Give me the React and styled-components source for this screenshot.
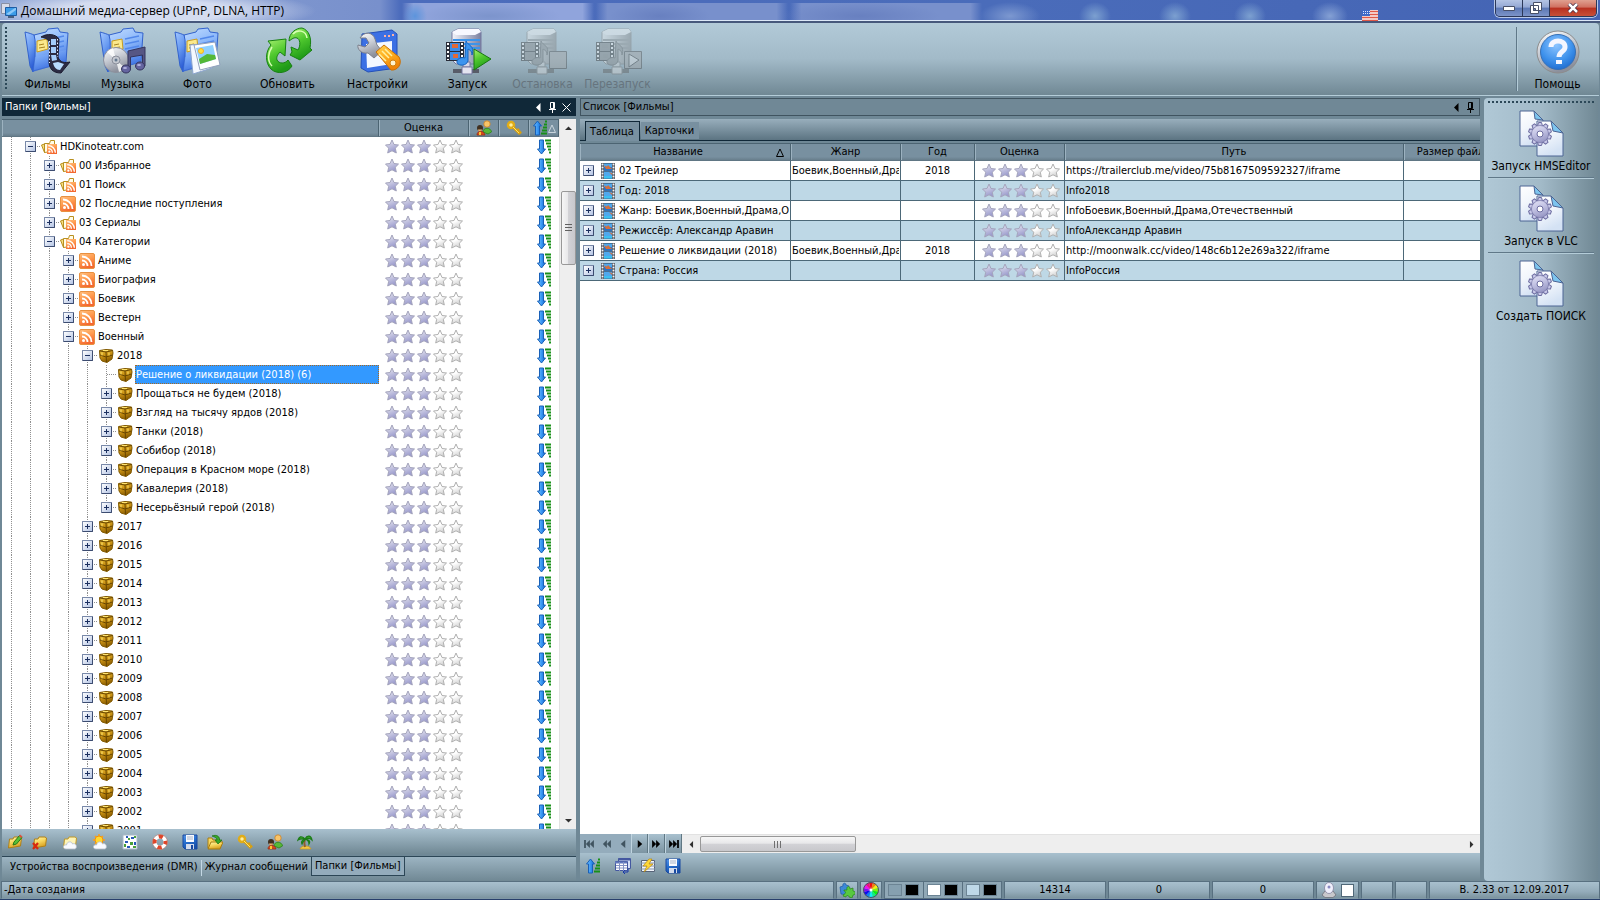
import React, { useState } from 'react';
import styled, { createGlobalStyle, css } from 'styled-components';

const GlobalStyle = createGlobalStyle`
    * { box-sizing: border-box; }
    body {
        margin: 0;
        overflow: hidden;
        background: #6f8896;
        color: #000;
        font-family: "DejaVu Sans Condensed", "Noto Sans", sans-serif;
        font-size: 11px;
        line-height: 14px;
    }
    button {
        margin: 0;
        padding: 0;
        border: 0;
        background: none;
        color: inherit;
        font: inherit;
    }
    svg { display: block; flex: none; }
`

/* ---------- data ---------- */

const treeRows = [
    { text: 'HDKinoteatr.com', level: 1, icon: 'folder', open: true },
    { text: '00 Избранное', level: 2, icon: 'folder' },
    { text: '01 Поиск', level: 2, icon: 'folder' },
    { text: '02 Последние поступления', level: 2, icon: 'rss' },
    { text: '03 Сериалы', level: 2, icon: 'folder' },
    { text: '04 Категории', level: 2, icon: 'folder', open: true },
    { text: 'Аниме', level: 3, icon: 'rss' },
    { text: 'Биография', level: 3, icon: 'rss' },
    { text: 'Боевик', level: 3, icon: 'rss' },
    { text: 'Вестерн', level: 3, icon: 'rss' },
    { text: 'Военный', level: 3, icon: 'rss', open: true },
    { text: '2018', level: 4, icon: 'box', open: true },
    { text: 'Решение о ликвидации (2018) (6)', level: 5, icon: 'box', leaf: true },
    { text: 'Прощаться не будем (2018)', level: 5, icon: 'box' },
    { text: 'Взгляд на тысячу ярдов (2018)', level: 5, icon: 'box' },
    { text: 'Танки (2018)', level: 5, icon: 'box' },
    { text: 'Собибор (2018)', level: 5, icon: 'box' },
    { text: 'Операция в Красном море (2018)', level: 5, icon: 'box' },
    { text: 'Кавалерия (2018)', level: 5, icon: 'box' },
    { text: 'Несерьёзный герой (2018)', level: 5, icon: 'box', last: true },
]

for (let year = 2017; year >= 2001; year--) {
    treeRows.push({ text: String(year), level: 4, icon: 'box' })
}

const movies = [
    { name: '02 Трейлер', genre: 'Боевик,Военный,Драма', year: '2018', path: 'https://trailerclub.me/video/75b8167509592327/iframe' },
    { name: 'Год: 2018', path: 'Info2018' },
    { name: 'Жанр: Боевик,Военный,Драма,Отечественный', path: 'InfoБоевик,Военный,Драма,Отечественный' },
    { name: 'Режиссёр: Александр Аравин', path: 'InfoАлександр Аравин' },
    { name: 'Решение о ликвидации (2018)', genre: 'Боевик,Военный,Драма', year: '2018', path: 'http://moonwalk.cc/video/148c6b12e269a322/iframe' },
    { name: 'Страна: Россия', path: 'InfoРоссия' },
]

/* ---------- icons ---------- */

const Grad = ({ id, from, to, mid, flat }) => (
    <linearGradient id={id} x1="0" y1="0" x2={flat ? 1 : 0.4} y2={flat ? 0 : 1}>
        <stop offset="0" stopColor={from} />
        {mid && <stop offset="0.5" stopColor={mid} />}
        <stop offset="1" stopColor={to} />
    </linearGradient>
)

const IconDefs = () => (
    <svg width="0" height="0" aria-hidden="true">
        <defs>
            <Grad id="gFolder" from="#c4deff" mid="#8cb8fa" to="#3f74e4" />
            <Grad id="gFlap" from="#a4c8ff" mid="#6a9cf2" to="#2e5fd6" />
            <Grad id="gGreen" from="#a8f070" mid="#4fc82e" to="#1f9a18" />
            <Grad id="gStar" from="#f0f0f4" mid="#c4c4e0" to="#9898cc" />
            <Grad id="gStarOff" from="#ffffff" mid="#ffffff" to="#d4d4d4" />
            <Grad id="gRss" from="#ffc080" mid="#ff9c50" to="#f46830" />
            <Grad id="gBox" from="#f0c840" mid="#cc9414" to="#8a5c00" />
            <Grad id="gArrow" from="#7cc4ff" mid="#3a98f4" to="#1468d0" flat />
            <Grad id="gSilver" from="#ffffff" mid="#c8ccd4" to="#8c909c" />
            <Grad id="gServer" from="#f4f4fa" mid="#b8bcd0" to="#7c80a0" flat />
            <Grad id="gOrange" from="#ffd050" mid="#ffb020" to="#ee8408" />
            <Grad id="gGear" from="#e4e4f6" mid="#c4c4e4" to="#9c9cc8" />
            <Grad id="gPage" from="#ffffff" mid="#f2f6fc" to="#d4e2f4" />
            <Grad id="gYellow" from="#fff8b0" mid="#f8d860" to="#d8a020" />
            <Grad id="gFloppy" from="#5a98e8" mid="#2870d0" to="#1850a8" />
            <radialGradient id="gHelp" cx="0.45" cy="0.3" r="0.75">
                <stop offset="0" stopColor="#8cc4ff" />
                <stop offset="0.6" stopColor="#3f92ec" />
                <stop offset="1" stopColor="#1c68cc" />
            </radialGradient>
        </defs>
    </svg>
)

const BigSvg = ({ children }) => (
    <svg width="48" height="48" viewBox="0 0 48 48" aria-hidden="true">{children}</svg>
)

const SmallSvg = ({ children }) => (
    <svg width="16" height="16" viewBox="0 0 16 16" aria-hidden="true">{children}</svg>
)

const BlueFolder = () => (
    <g strokeLinejoin="round">
        <path d="M10 8 L22 5 L24 2 L34 1 L36 5 L44 6 L42 35 L9 44 Z" fill="url(#gFolder)" stroke="#3262cc" />
        <path d="M13 14 L23 12 L24 22 L13 25 Z" fill="#fbe98c" stroke="#c89c20" />
        <path d="M15 18l5-1M15 21l6-1" stroke="#a88420" />
        <path d="M26 12l14-3M26 17l14-3M26 22l14-3" stroke="#5288ea" strokeWidth="1.5" />
        <path d="M1 5 C5 6 8 7 10 8 C12 14 11 22 11 30 L9 45 L6 39 Z" fill="url(#gFlap)" stroke="#3262cc" />
        <path d="M11 30 L42 23 L42 35 L9 45 Z" fill="url(#gFlap)" opacity="0.45" />
    </g>
)

const FilmsIcon = () => (
    <BigSvg>
        <BlueFolder />
        <path d="M17 10 C23 6 32 7 35 12 L34 30 C36 36 41 36 46 35 L37 46 C29 46 25 42 25 34 L26 17 C25 12 21 11 17 10Z" fill="#2c2c44" stroke="#1c1c30" />
        <path d="M27 12h5v6h-5zM27 20h5v6h-5zM27 28h5l1 5-5 1z" fill="#a4ccfa" />
        <path d="M29 36l5-1 6 2-4 6c-4 0-6-3-7-7z" fill="#b8dcff" />
        <path d="M25.500 14v22M33.500 12v18" stroke="#e8ecff" strokeDasharray="1.5 2" />
    </BigSvg>
)

const MusicIcon = () => (
    <BigSvg>
        <BlueFolder />
        <circle cx="17" cy="33" r="12.5" fill="url(#gSilver)" stroke="#8c909c" />
        <path d="M17 33L8 25a12 12 0 0 1 6-4zM17 33l9 8a12 12 0 0 1-6 4z" fill="#fff" opacity="0.8" />
        <circle cx="17" cy="33" r="4" fill="#c4c8d0" stroke="#8a8e9a" />
        <circle cx="17" cy="33" r="1.5" fill="#677a90" />
        <path d="M29 24 L46 20 V39 H43.500 V28 L31.500 30 V42 H29Z" fill="#565684" stroke="#34345c" />
        <ellipse cx="27" cy="42" rx="4.500" ry="4" fill="#6464a0" stroke="#34345c" />
        <ellipse cx="41" cy="39" rx="4.500" ry="4" fill="#6464a0" stroke="#34345c" />
        <ellipse cx="26" cy="41" rx="2" ry="1" fill="#b4b4e0" />
        <ellipse cx="40" cy="38" rx="2" ry="1" fill="#b4b4e0" />
    </BigSvg>
)

const PhotoIcon = () => (
    <BigSvg>
        <BlueFolder />
        <path d="M16 18 L36 16 L38 41 L19 47 Z" fill="#f4f8ff" stroke="#8ca4cc" />
        <path d="M20 18 L41 15 L46 38 L26 43 Z" fill="#fff" stroke="#90a0bc" />
        <path d="M22 21 L39 18 L42 32 L26 37 Z" fill="#90d0ff" />
        <path d="M25 32 L33 27 L41 28 L42 32 L26 37 Z" fill="#54b838" />
        <circle cx="27" cy="24" r="2.500" fill="#ffe040" stroke="#f8b020" />
    </BigSvg>
)

const RefreshIcon = () => (
    <BigSvg>
        <g fill="url(#gGreen)" stroke="#188012" strokeLinejoin="round">
            <path d="M25 14 C25 6 32 1 38 1 C45 3 48 11 46 21 L48 23 L36 33 L26 28 L28 25 L27 20 L34 23 C37 18 36 12 33 11 C30 10 28 12 25 14Z" />
            <path d="M22 12 L4 14 L7 18 C1 25 1 36 7 42 C13 48 24 46 28 39 L24 33 C21 37 15 37 13 33 C12 30 14 27 16 25 L21 29 Z" />
        </g>
        <path d="M29 7c4-5 13-4 14 4M8 20c-4 6-5 14 0 19" fill="none" stroke="#d8ffb4" strokeWidth="1.5" />
    </BigSvg>
)

const SettingsIcon = () => (
    <BigSvg>
        <path d="M8 7 L38 3 L43 7 V41 L14 45 L7 41 Z" fill="#3c70e4" stroke="#2450b8" strokeLinejoin="round" />
        <path d="M12 17 L38 14 V37 L13 41 Z" fill="#f4f8ff" />
        <path d="M30 9h2M34 9h2M38 8h2" stroke="#ffb0a0" strokeWidth="2" />
        <path d="M6 11 C10 4 19 5 21 12 L23 18 L28 24 L20 31 L14 26 C7 27 3 22 4 18 L11 20 L15 16 L12 11 Z" fill="url(#gSilver)" stroke="#7c808c" />
        <path d="M22 25 L30 18 L45 30 C49 37 43 44 37 43 Z" fill="url(#gOrange)" stroke="#c87008" strokeLinejoin="round" />
        <path d="M28 24l7 7M31 22l7 7M25 27l7 7" stroke="#fff0a0" strokeWidth="1.5" />
        <circle cx="39" cy="36" r="3" fill="#fff4d0" stroke="#d08010" />
    </BigSvg>
)

const ServerBody = () => (
    <g>
        <path d="M8 5 L14 2 H35 L37 5 V29 L32 37 H12 L8 33 Z" fill="url(#gServer)" stroke="#7478a0" />
        <path d="M8 5 L14 2 H35 L37 5 L31 8 H12 Z" fill="#f8f8ff" />
        <path d="M9 13h27M9 17h27M9 21h27" stroke="#3d94ea" strokeWidth="2" />
        <path d="M19 35h7v5h-7z" fill="#d8d8e8" stroke="#7478a0" />
        <path d="M9 42h26v4h-26z" fill="#585c68" />
        <path d="M18 40h10v7h-10z" fill="#e4e4f0" stroke="#7478a0" />
        <path d="M2 15h18v19H2z" fill="#282c38" />
        <path d="M6 16h10v8H6zM6 25h10v8H6z" fill="#3c8ce8" />
        <path d="M8 17h6v4H8zM9 27h5v4H9z" fill="#e06838" />
        <path d="M4 16v17M18 16v17" stroke="#fff" strokeWidth="2" strokeDasharray="2 2" />
        <path d="M22 14 C24 19 31 18 28 28 C28 23 25 23 24 22 V34 C22 40 12 39 13 34 C14 31 18 30 21 31Z" fill="#3c94ee" stroke="#1464c0" />
    </g>
)

const StartIcon = () => (
    <BigSvg>
        <ServerBody />
        <path d="M30 22 L47 32 L30 43 Z" fill="url(#gGreen)" stroke="#187810" strokeLinejoin="round" />
    </BigSvg>
)

const StopIcon = () => (
    <BigSvg>
        <ServerBody />
        <path d="M30.500 24.500h17v17h-17z" fill="#9ca4a8" stroke="#404448" />
    </BigSvg>
)

const RestartIcon = () => (
    <BigSvg>
        <ServerBody />
        <path d="M30.500 24.500h17v17h-17z" fill="#9ca4a8" stroke="#404448" />
        <path d="M35 27l10 6-10 7z" fill="#e0e4e6" stroke="#34383c" />
    </BigSvg>
)

const HelpIcon = () => (
    <BigSvg>
        <circle cx="24" cy="25" r="21" fill="url(#gSilver)" stroke="#8c8c8c" />
        <circle cx="24" cy="25" r="17.5" fill="url(#gHelp)" stroke="#3870b4" />
        <path d="M17 20 C17 12 31 12 31 20 C31 25 25 24 25 30" fill="none" stroke="#f4f6ff" strokeWidth="5" />
        <path d="M22 33h6v4h-6z" fill="#f4f6ff" />
    </BigSvg>
)

const teeth = Array.from({ length: 10 }, (_, i) => i * 36)

const Gear = ({ x, y }) => (
    <g transform={`translate(${x} ${y})`}>
        {teeth.map((a) => (
            <path key={a} d="M-2.5 -8 L-1.5 -11.5 H1.5 L2.5 -8Z" transform={`rotate(${a})`} fill="#c8c8e8" stroke="#6c6ca0" />
        ))}
        <circle r="8.5" fill="url(#gGear)" stroke="#7c7cac" strokeWidth="0.6" />
        <circle r="3" fill="#fff" stroke="#6c6ca0" />
    </g>
)

const ScriptIcon = () => (
    <BigSvg>
        <path d="M3 2 H17 L26 11 V37 H3 Z" fill="url(#gPage)" stroke="#4c6494" />
        <path d="M17 2 L18 10 L26 11 Z" fill="#7cc4ee" stroke="#4c6494" />
        <path d="M20 12 H34 L46 24 V47 H20 Z" fill="url(#gPage)" stroke="#4c6494" />
        <path d="M34 12 L36 22 L46 24 Z" fill="#7cc4ee" stroke="#4c6494" />
        <Gear x={23} y={25} />
    </BigSvg>
)

const RssWaves = ({ x = 0, y = 0, k = 1 }) => (
    <g transform={`translate(${x} ${y}) scale(${k})`}>
        <circle cx="4.5" cy="11.5" r="1.5" fill="#fff" />
        <path d="M3 7.5a5.5 5.5 0 0 1 5.5 5.5M3 3.5a9.5 9.5 0 0 1 9.5 9.5" fill="none" stroke="#fff" strokeWidth="1.8" />
    </g>
)

const RssIcon = () => (
    <SmallSvg>
        <rect x="0.5" y="0.5" width="15" height="15" rx="1.5" fill="url(#gRss)" stroke="#e89040" />
        <RssWaves />
    </SmallSvg>
)

const FolderRssIcon = () => (
    <SmallSvg>
        <path d="M3.500 13.500 V4.500 H8.500 L9.500 1.500 H13.500 V12 Z" fill="#fffce8" stroke="#b89020" />
        <path d="M0.500 6 L3.500 5 V13.500 Z" fill="#f8e080" stroke="#b89020" />
        <rect x="6" y="5" width="10" height="10" fill="url(#gRss)" />
        <RssWaves x={5} y={4} k={0.75} />
    </SmallSvg>
)

const BoxIcon = () => (
    <SmallSvg>
        <path d="M1.500 2.500 L8 1.500 L14.500 2 L15 5 L14 11 L9 14.500 L4 13 L2 10 Z" fill="url(#gBox)" stroke="#805800" strokeLinejoin="round" />
        <path d="M8 4 L8.500 14 M2 7 L8 9 L14.500 7 M2 3 L8 4 L14.500 2.500" fill="none" stroke="#684600" />
        <path d="M4 4.500v3M11 4.500v3M5 2.500h5" stroke="#ffe470" />
    </SmallSvg>
)

const StarIcon = ({ on }) => (
    <SmallSvg>
        <path
            d="M7 1 L9 5.500 L13.500 6 L10.300 9.200 L11.300 14 L7 11.800 L2.700 14 L3.700 9.200 L0.500 6 L5 5.500 Z"
            fill={on ? 'url(#gStar)' : 'url(#gStarOff)'}
            stroke={on ? '#a4a4bc' : '#b0b0b0'}
            strokeLinejoin="round"
        />
    </SmallSvg>
)

const SortDownIcon = () => (
    <SmallSvg>
        <path d="M3.500 1 H7.500 V10 H9.500 L5.500 15 L1.500 10 H3.500 Z" fill="url(#gArrow)" stroke="#1860b8" />
        <path d="M9 1.500h6M10 4.500h5M11 7.500h4M12 10.500h3M13 13.500h2" stroke="#189018" strokeWidth="2" />
    </SmallSvg>
)

const SortUpIcon = () => (
    <SmallSvg>
        <path d="M3.500 15 H7.500 V6 H9.500 L5.500 1 L1.500 6 H3.500 Z" fill="url(#gArrow)" stroke="#1860b8" />
        <path d="M13 1.500h2M12 4.500h3M11 7.500h4M10 10.500h5M9 13.500h6" stroke="#189018" strokeWidth="2" />
    </SmallSvg>
)

const PeopleIcon = () => (
    <SmallSvg>
        <circle cx="11" cy="4" r="3.200" fill="#f8c468" stroke="#c88028" strokeWidth="0.8" />
        <path d="M7 12 C7 7 15 7 15.500 12 L12 14Z" fill="#58b838" stroke="#2c8018" strokeWidth="0.8" />
        <circle cx="4" cy="8" r="3" fill="#403020" />
        <path d="M2 9.500a2 2 0 0 0 4 0z" fill="#f0b878" />
        <path d="M1 15 C1 10 8 10 9 15Z" fill="#d84820" stroke="#983010" strokeWidth="0.8" />
        <path d="M3 12h2v3H3z" fill="#f8c830" />
    </SmallSvg>
)

const KeyIcon = () => (
    <SmallSvg>
        <circle cx="5" cy="5" r="3" fill="#fff0a0" stroke="#e0ac18" strokeWidth="2.500" />
        <path d="M7 7 L14 14 M11 11l2-2M13 13.500l2-2" stroke="#d8a010" strokeWidth="2.600" />
        <path d="M7 7 L13 13" stroke="#ffe468" />
    </SmallSvg>
)

const folderPath = 'M1.500 14 L2.500 5 H6 L7 3 H13 L14.500 4 L13.500 12 Z'

const FolderEditIcon = () => (
    <SmallSvg>
        <path d={folderPath} fill="url(#gYellow)" stroke="#b08018" />
        <path d="M6 11 L7 8 L12.500 1.500 L15 3.500 L9.500 10 Z" fill="#58c038" stroke="#287818" />
        <path d="M12 2l1-1.500 2.500 2L14 4z" fill="#e05038" />
    </SmallSvg>
)

const FolderDeleteIcon = () => (
    <SmallSvg>
        <path d={folderPath} fill="url(#gYellow)" stroke="#b08018" />
        <path d="M1 9 L6 15 M6 9 L1 15" stroke="#d82810" strokeWidth="2.200" />
    </SmallSvg>
)

const Cloud = () => (
    <path d="M4 15 C0 15 1 10 4.500 11 C5 7 10 7 10.500 10 C14 8 16 14 13 15 Z" fill="#f8faff" stroke="#b4bcc8" strokeWidth="0.8" />
)

const FolderCloudIcon = () => (
    <SmallSvg>
        <path d={folderPath} fill="#fdf4b8" stroke="#c09828" />
        <Cloud />
    </SmallSvg>
)

const SunIcon = () => (
    <SmallSvg>
        <path d="M7 0v12M1 6h12M3 2l8 8M11 2l-8 8" stroke="#f8a020" strokeWidth="1.500" />
        <circle cx="7" cy="6" r="4" fill="#ffd830" stroke="#f09010" />
        <Cloud />
    </SmallSvg>
)

const MosaicIcon = () => (
    <SmallSvg>
        <path d="M1 1h14v14H1z" fill="#fff" stroke="#a8b8c8" />
        <path d="M4 2h2v2H4zM9 3h3v2H9zM3 7h3v2H3zM12 8h2v3h-2zM5 12h3v2H5z" fill="#2858b8" />
        <path d="M6 4h2v2H6zM12 2h2v2h-2zM8 8h3v3H8zM2 10h2v3H2zM11 12h3v2h-3z" fill="#48a038" />
    </SmallSvg>
)

const LifebuoyIcon = () => (
    <SmallSvg>
        <circle cx="8" cy="8" r="5.500" fill="none" stroke="#fff" strokeWidth="4" />
        <circle cx="8" cy="8" r="5.500" fill="none" stroke="#e04428" strokeWidth="4" strokeDasharray="4.320 4.320" strokeDashoffset="2" />
        <circle cx="8" cy="8" r="7.500" fill="none" stroke="#b8786c" strokeWidth="0.600" />
    </SmallSvg>
)

const FloppyIcon = () => (
    <SmallSvg>
        <path d="M1 1 H15 V15 H3 L1 13 Z" fill="url(#gFloppy)" stroke="#1848a0" />
        <path d="M4 1h8v7H4z" fill="#f8faff" />
        <path d="M5 3h6M5 5h6" stroke="#a8b4c8" />
        <path d="M4 10h8v5H4z" fill="#d4dcec" />
        <path d="M9 11h2v4H9z" fill="#1848a0" />
    </SmallSvg>
)

const ImportIcon = () => (
    <SmallSvg>
        <path d="M1 14 V4 H5 L6 6 H13 V14Z" fill="#f8d860" stroke="#a87c10" />
        <path d="M1 15 L4 8 H16 L13 15Z" fill="url(#gYellow)" stroke="#a87c10" />
        <path d="M5 2 C10 0 13 3 12.500 6 H15 L11 10 L8 6 H10 C10 4 8 3 5 2Z" fill="#38a828" stroke="#187010" strokeWidth="0.700" />
    </SmallSvg>
)

const PalmIcon = () => (
    <SmallSvg>
        <path d="M3 15 C4 11 13 11 14 15Z" fill="#f4c840" stroke="#c89820" strokeWidth="0.700" />
        <path d="M8 5 C7 8 7 10 8 13" fill="none" stroke="#90602c" strokeWidth="2" />
        <path d="M8 5 C4 1 2 3 1 6 C4 4 6 5 8 5 C5 6 4 8 5 10 C6 7 8 7 8 5 C11 6 12 7 12 10 C14 7 11 5 8 5 C11 4 13 4 15 6 C14 1 10 1 8 5Z" fill="#38a828" stroke="#1c7c18" strokeWidth="1.200" />
    </SmallSvg>
)

const TablesIcon = () => (
    <SmallSvg>
        <path d="M3.500 0.500h12v10h-12z" fill="#d4e0f8" stroke="#4458a0" />
        <path d="M3 1.500h12" stroke="#4458a0" strokeWidth="2" />
        <path d="M0.500 3.500h12v9h-12z" fill="#fff" stroke="#4458a0" />
        <path d="M0 4.500h12" stroke="#6078bc" strokeWidth="2" />
        <path d="M1 7.500h11M1 10h11M4.500 4v9M8.500 4v9" stroke="#8494c4" />
        <path d="M13 11v3h-5M10 12l-2 2 2 2" fill="none" stroke="#1838a8" />
    </SmallSvg>
)

const FlashIcon = () => (
    <SmallSvg>
        <path d="M1.500 2.500h13v11h-13z" fill="#f0f4fc" stroke="#586478" />
        <path d="M1 5h14M1 8h14M1 11h14" stroke="#8494ac" />
        <path d="M9 1 L3 8 H7 L4 14 L13 6 H9 L12 1Z" fill="#ffd838" stroke="#b88810" strokeWidth="0.700" />
    </SmallSvg>
)

const PuzzleIcon = () => (
    <SmallSvg>
        <path d="M1 5l3-1C3 1 7 0 7 3l3 1-1 9-7-1z" fill="#3c88d8" stroke="#2058a0" strokeWidth="0.700" />
        <path d="M5 8l3 0C7 4 11 3 11 7l3-1 0 3c3 0 3 4 0 4l-1 3-3-1c0-2-3-2-3 0l-3-1 1-2c2 0 2-3 0-3z" fill="#58c840" stroke="#288818" strokeWidth="0.700" />
    </SmallSvg>
)

const hues = Array.from({ length: 12 }, (_, i) => i * 30)

const WheelIcon = () => (
    <SmallSvg>
        {hues.map((h) => (
            <path key={h} d="M8 8 L6 0.500 H10 Z" transform={`rotate(${h} 8 8)`} fill={`hsl(${h} 90% 50%)`} />
        ))}
        <circle cx="8" cy="8" r="1.500" fill="#fff" />
        <circle cx="8" cy="8" r="7.500" fill="none" stroke="#4c5468" />
    </SmallSvg>
)

const WebcamIcon = () => (
    <SmallSvg>
        <path d="M1 13 L4 9 H12 L15 13 L12 15.500 H4Z" fill="#c8c8cc" stroke="#707078" strokeWidth="0.800" />
        <ellipse cx="8" cy="6" rx="4.500" ry="5.500" fill="#f0f0fc" stroke="#8484a0" strokeWidth="0.800" />
        <circle cx="8" cy="5" r="1.500" fill="#8888c0" />
    </SmallSvg>
)

const MovieIcon = () => (
    <SmallSvg>
        <path d="M1 0h14v16H1z" fill="#383c44" />
        <path d="M4 0.500h8v7H4zM4 8.500h8v7H4z" fill="#50a8ec" />
        <path d="M4 4h8v3.500H4z" fill="#2c74c8" />
        <path d="M4 2.500l3 1 1-1.500 4 4H6zM9 9l3 1v2z" fill="#d07040" />
        <path d="M4 13h8v2.500H4z" fill="#3cc0f0" />
        <path d="M2.500 0.500v16M13.500 0.500v16" stroke="#f4f4f8" strokeDasharray="2 1" strokeWidth="2" />
    </SmallSvg>
)

const PinIcon = () => (
    <svg width="9" height="11" viewBox="0 0 9 11" aria-hidden="true">
        <path d="M2.500 0.500h4v6h-4zM5.500 1v5M1 7.500h7M4.500 8v3" fill="none" stroke="currentColor" />
    </svg>
)

const TriangleIcon = ({ turn = 0, size = 9 }) => (
    <svg width={size} height={size} viewBox="0 0 9 9" aria-hidden="true">
        <path d="M6.500 0 V9 L2 4.500Z" fill="currentColor" transform={`rotate(${turn} 4.500 4.500)`} />
    </svg>
)

const CloseIcon = () => (
    <svg width="9" height="9" viewBox="0 0 9 9" aria-hidden="true">
        <path d="M0.500 0.500l8 8M8.500 0.500l-8 8" stroke="currentColor" />
    </svg>
)

const SortMark = () => (
    <svg width="8" height="9" viewBox="0 0 8 9" aria-hidden="true">
        <path d="M4 1 L7.500 8.500 H0.500Z" fill="none" stroke="currentColor" />
    </svg>
)

const NavIcon = ({ kind, back }) => (
    <svg width="10" height="8" viewBox="0 0 11 9" aria-hidden="true">
        <g fill="currentColor" transform={back ? 'translate(11 0) scale(-1 1)' : undefined}>
            {kind === 'one' ? <path d="M3 0 L8 4.500 L3 9Z" /> : <path d="M0 0 L4.500 4.500 L0 9ZM4.500 0 L9 4.500 L4.500 9Z" />}
            {kind === 'end' && <path d="M9 0h2v9H9z" />}
        </g>
    </svg>
)

const AppIcon = () => (
    <SmallSvg>
        <path d="M0.500 0.500h8v10h-8z" fill="#d8dce8" stroke="#8890a4" />
        <path d="M4.500 4.500h11v8h-11z" fill="#3c9ce8" stroke="#1c5ca4" />
        <path d="M5 11l9-6h1v2l-7 5z" fill="#8cc8f8" />
        <path d="M7 14h6" stroke="#486080" strokeWidth="2" />
    </SmallSvg>
)

const FlagIcon = () => (
    <svg width="16" height="11" viewBox="0 0 16 11" aria-hidden="true">
        <path d="M0 0h16v11H0z" fill="#f8f0f0" />
        <path d="M0 1.500h16M0 4.500h16M0 7.500h16M0 10.500h16" stroke="#e05848" strokeWidth="1.500" />
        <path d="M0 0h8v6H0z" fill="#3c68c8" />
        <path d="M1 1.500h7M1 3.500h7" stroke="#dce4fc" strokeDasharray="1 1" />
    </svg>
)

const rowIcons = { folder: <FolderRssIcon />, rss: <RssIcon />, box: <BoxIcon /> }

const Stars = () => (
    <StarLine role="img" aria-label="3 из 5">
        {[1, 2, 3, 4, 5].map((n) => <StarIcon key={n} on={n <= 3} />)}
    </StarLine>
)

/* ---------- page ---------- */

function FolderPanel() {
    const [selected, setSelected] = useState(12)

    return (
        <Panel>
            <PanelTitle $active>
                <PanelName>Папки [Фильмы]</PanelName>
                <TitleButton aria-label="Назад"><TriangleIcon /></TitleButton>
                <TitleButton aria-label="Закрепить"><PinIcon /></TitleButton>
                <TitleButton aria-label="Закрыть"><CloseIcon /></TitleButton>
            </PanelTitle>
            <TreeArea>
                <TreeScroll>
                    <Grid>
                        <colgroup>
                            <col />
                            <Col $w={90} />
                            <Col $w={30} />
                            <Col $w={30} />
                            <Col $w={30} />
                        </colgroup>
                        <thead>
                            <tr>
                                <Th aria-label="Имя" />
                                <Th>Оценка</Th>
                                <Th><ThIcon><PeopleIcon /></ThIcon></Th>
                                <Th><ThIcon><KeyIcon /></ThIcon></Th>
                                <Th><ThIcon $dim><SortUpIcon /><SortMark /></ThIcon></Th>
                            </tr>
                        </thead>
                        <tbody>
                            {treeRows.map((row, i) => (
                                <tr key={row.text}>
                                    <TreeCell>
                                        <TreeLine onClick={() => setSelected(i)}>
                                            {Array.from({ length: row.level }, (_, n) => <Guide key={n} />)}
                                            <Guide $joint $last={row.last}>
                                                {!row.leaf && (
                                                    <Expander aria-label={row.open ? 'Свернуть' : 'Развернуть'} $open={row.open} />
                                                )}
                                            </Guide>
                                            <RowIcon>{rowIcons[row.icon]}</RowIcon>
                                            <RowText $selected={i === selected}>{row.text}</RowText>
                                        </TreeLine>
                                    </TreeCell>
                                    <TreeCell><Stars /></TreeCell>
                                    <TreeCell />
                                    <TreeCell />
                                    <TreeCell><SortCell><SortDownIcon /></SortCell></TreeCell>
                                </tr>
                            ))}
                        </tbody>
                    </Grid>
                </TreeScroll>
                <ScrollBar>
                    <ScrollArrow aria-label="Вверх"><TriangleIcon turn={90} size={7} /></ScrollArrow>
                    <Thumb />
                    <Track />
                    <ScrollArrow aria-label="Вниз"><TriangleIcon turn={-90} size={7} /></ScrollArrow>
                </ScrollBar>
            </TreeArea>
            <SmallTools>
                <ToolGroup>
                    <SmallTool aria-label="Изменить"><FolderEditIcon /></SmallTool>
                    <SmallTool aria-label="Удалить"><FolderDeleteIcon /></SmallTool>
                </ToolGroup>
                <SmallTool aria-label="Облако"><FolderCloudIcon /></SmallTool>
                <SmallTool aria-label="Погода"><SunIcon /></SmallTool>
                <SmallTool aria-label="Мозаика"><MosaicIcon /></SmallTool>
                <SmallTool aria-label="Помощь"><LifebuoyIcon /></SmallTool>
                <ToolGroup>
                    <SmallTool aria-label="Сохранить"><FloppyIcon /></SmallTool>
                    <SmallTool aria-label="Загрузить"><ImportIcon /></SmallTool>
                </ToolGroup>
                <SmallTool aria-label="Ключ"><KeyIcon /></SmallTool>
                <SmallTool aria-label="Пользователи"><PeopleIcon /></SmallTool>
                <SmallTool aria-label="Отдых"><PalmIcon /></SmallTool>
            </SmallTools>
            <BottomTabs>
                <BottomTab>Устройства воспроизведения (DMR)</BottomTab>
                <TabRule />
                <BottomTab>Журнал сообщений</BottomTab>
                <BottomTab $active>Папки [Фильмы]</BottomTab>
            </BottomTabs>
        </Panel>
    )
}

function ListPanel() {
    return (
        <Panel>
            <PanelTitle>
                <PanelName>Список [Фильмы]</PanelName>
                <TitleButton aria-label="Назад"><TriangleIcon /></TitleButton>
                <TitleButton aria-label="Закрепить"><PinIcon /></TitleButton>
            </PanelTitle>
            <TopTabs>
                <TopTab $active>Таблица</TopTab>
                <TopTab>Карточки</TopTab>
            </TopTabs>
            <ListScroll>
                <MovieGrid>
                    <colgroup>
                        <Col $w={211} />
                        <Col $w={110} />
                        <Col $w={74} />
                        <Col $w={90} />
                        <Col $w={339} />
                        <Col $w={100} />
                    </colgroup>
                    <thead>
                        <tr>
                            <Th><NameHead><span>Название</span><SortMark /></NameHead></Th>
                            <Th>Жанр</Th>
                            <Th>Год</Th>
                            <Th>Оценка</Th>
                            <Th>Путь</Th>
                            <Th>Размер файла</Th>
                        </tr>
                    </thead>
                    <tbody>
                        {movies.map((m) => (
                            <MovieRow key={m.name}>
                                <MovieCell>
                                    <MovieName>
                                        <Expander aria-label="Развернуть" />
                                        <MovieIcon />
                                        <Clip>{m.name}</Clip>
                                    </MovieName>
                                </MovieCell>
                                <MovieCell><Clip>{m.genre}</Clip></MovieCell>
                                <MovieCell $center>{m.year}</MovieCell>
                                <MovieCell><Stars /></MovieCell>
                                <MovieCell>{m.path}</MovieCell>
                                <MovieCell />
                            </MovieRow>
                        ))}
                    </tbody>
                </MovieGrid>
            </ListScroll>
            <NavBar>
                <NavButton disabled aria-label="В начало"><NavIcon kind="end" back /></NavButton>
                <NavButton disabled aria-label="Страница назад"><NavIcon kind="two" back /></NavButton>
                <NavButton disabled aria-label="Назад"><NavIcon kind="one" back /></NavButton>
                <NavButton aria-label="Вперёд"><NavIcon kind="one" /></NavButton>
                <NavButton aria-label="Страница вперёд"><NavIcon kind="two" /></NavButton>
                <NavButton aria-label="В конец"><NavIcon kind="end" /></NavButton>
                <ScrollBar $wide>
                    <ScrollArrow $wide aria-label="Влево"><TriangleIcon size={7} /></ScrollArrow>
                    <Thumb $wide />
                    <Track />
                    <ScrollArrow $wide aria-label="Вправо"><TriangleIcon turn={180} size={7} /></ScrollArrow>
                </ScrollBar>
            </NavBar>
            <SmallTools $tall>
                <ToolGroup>
                    <SmallTool aria-label="Сортировка"><SortUpIcon /></SmallTool>
                </ToolGroup>
                <ToolGroup>
                    <SmallTool aria-label="Таблицы"><TablesIcon /></SmallTool>
                    <SmallTool aria-label="Быстрое действие"><FlashIcon /></SmallTool>
                    <SmallTool aria-label="Сохранить"><FloppyIcon /></SmallTool>
                </ToolGroup>
            </SmallTools>
        </Panel>
    )
}

function StatusBar() {
    return (
        <Status>
            <StatusCell $grow>-Дата создания</StatusCell>
            <StatusCell $w={22} $center><PuzzleIcon /></StatusCell>
            <StatusCell $w={22} $center><WheelIcon /></StatusCell>
            <Swatches>
                <SwatchPair><Swatch aria-label="Фон окна" $color="#86a0b0" /><Swatch aria-label="Текст окна" $color="#000" /></SwatchPair>
                <SwatchPair><Swatch aria-label="Фон строки" $color="#fff" /><Swatch aria-label="Текст строки" $color="#000" /></SwatchPair>
                <SwatchPair><Swatch aria-label="Фон чётной строки" $color="#bed8e8" /><Swatch aria-label="Текст чётной строки" $color="#000" /></SwatchPair>
            </Swatches>
            <StatusCell $w={102} $center>14314</StatusCell>
            <StatusCell $w={102} $center>0</StatusCell>
            <StatusCell $w={102} $center>0</StatusCell>
            <StatusCell $w={43} $center><WebcamIcon /><StatusCheck type="checkbox" aria-label="Камера" /></StatusCell>
            <StatusCell $w={32} />
            <StatusCell $w={32} />
            <StatusCell $w={171} $center>В. 2.33 от 12.09.2017</StatusCell>
        </Status>
    )
}

function App() {
    return (
        <Window>
            <GlobalStyle />
            <IconDefs />
            <TitleBar>
                <AppIcon />
                <TitleText>Домашний медиа-сервер (UPnP, DLNA, HTTP)</TitleText>
                <Flag><FlagIcon /></Flag>
                <WindowButtons>
                    <WindowButton aria-label="Свернуть">
                        <svg width="12" height="5" viewBox="0 0 12 5"><path d="M0.500 0.500h11v4h-11z" fill="#fff" stroke="#485068" /></svg>
                    </WindowButton>
                    <WindowButton aria-label="Восстановить">
                        <svg width="13" height="13" viewBox="0 0 13 13">
                            <path d="M3.500 0.500h8v8h-8zM0.500 3.500h8v8h-8z" fill="#fff" stroke="#485068" />
                            <path d="M3.500 6.500h2v2h-2z" fill="#6880b8" stroke="#485068" />
                        </svg>
                    </WindowButton>
                    <WindowButton $close aria-label="Закрыть">
                        <svg width="12" height="10" viewBox="0 0 12 10">
                            <path d="M2 1l8 8M10 1l-8 8" stroke="#40243c" strokeWidth="4" />
                            <path d="M2 1l8 8M10 1l-8 8" stroke="#fff" strokeWidth="2.500" />
                        </svg>
                    </WindowButton>
                </WindowButtons>
            </TitleBar>
            <Toolbar>
                <Grip />
                <Tools>
                    <Tool><FilmsIcon />Фильмы</Tool>
                    <Tool><MusicIcon />Музыка</Tool>
                    <Tool><PhotoIcon />Фото</Tool>
                </Tools>
                <Tools><Tool><RefreshIcon />Обновить</Tool></Tools>
                <Tools><Tool><SettingsIcon />Настройки</Tool></Tools>
                <Tools>
                    <Tool><StartIcon />Запуск</Tool>
                    <Tool disabled><StopIcon />Остановка</Tool>
                    <Tool disabled><RestartIcon />Перезапуск</Tool>
                </Tools>
                <HelpBox><Tool><HelpIcon />Помощь</Tool></HelpBox>
            </Toolbar>
            <Main>
                <FolderPanel />
                <ListPanel />
                <SideBar>
                    <SideGrip />
                    <SideTool><ScriptIcon />Запуск HMSEditor</SideTool>
                    <SideTool><ScriptIcon />Запуск в VLC</SideTool>
                    <SideTool><ScriptIcon />Создать ПОИСК</SideTool>
                </SideBar>
            </Main>
            <StatusBar />
            <Taskbar />
        </Window>
    )
}

/* ---------- styles ---------- */

const Window = styled.div`
    display: flex;
    flex-direction: column;
    height: 100vh;
`

/* what shines through the glass of the title bar */
const smudge = (x, w, color) =>
    `radial-gradient(ellipse ${w}px 14px at ${x}px 16px, ${color}, transparent)`

const glassTab = (x, color) =>
    `linear-gradient(90deg, transparent, ${color} 6%, ${color} 94%, transparent) ${x}px 3px / 192px 20px no-repeat`

const TitleBar = styled.header`
    display: flex;
    flex: none;
    align-items: center;
    gap: 4px;
    height: 23px;
    padding: 0 3px 0 1px;
    border-bottom: 2px solid #46587c;
    box-shadow: inset 0 -1px #dce8f8;
    background:
        radial-gradient(ellipse 170px 22px at 146px 11px, #d4dcf0 50%, transparent),
        ${smudge(415, 12, '#5c94dc')},
        ${smudge(490, 70, '#7c94cc')},
        ${smudge(660, 50, '#6880c0')},
        ${smudge(860, 80, '#6880c0')},
        ${smudge(1010, 30, '#7c98d0')},
        ${smudge(1095, 16, '#7ca0d0')},
        ${smudge(1175, 16, '#7ca0d0')},
        ${smudge(1250, 16, '#7ca0d0')},
        ${smudge(1330, 18, '#84a0d4')},
        ${glassTab(402, '#90a4dc')},
        ${glassTab(596, '#7890cc')},
        ${glassTab(790, '#7890cc')},
        linear-gradient(90deg, #8ca4d4, #7890cc 380px, #4c6cbc 400px, #4a6cba 1000px, #4464b4);
`

const TitleText = styled.h1`
    flex: 1;
    margin: 0;
    font-family: "Open Sans", "Noto Sans", sans-serif;
    font-size: 12px;
    font-weight: 400;
    line-height: 18px;
`

const Flag = styled.div`
    align-self: flex-end;
`

const WindowButtons = styled.div`
    display: flex;
    align-self: flex-start;
    margin-left: 113px;
    border: 1px solid #2c3858;
    border-top: 0;
    border-radius: 0 0 5px 5px;
    box-shadow: 0 0 0 1px #b8c8e8;
    overflow: hidden;
`

const WindowButton = styled.button`
    display: flex;
    align-items: center;
    justify-content: center;
    width: ${(p) => (p.$close ? 46 : 27)}px;
    height: 16px;
    border-right: ${(p) => (p.$close ? 0 : 1)}px solid #2c3858;
    background: ${(p) => (p.$close
        ? 'linear-gradient(#e0a090, #d07060 45%, #b83020 50%, #c85038)'
        : 'linear-gradient(#b4c4e4, #94a8d4 45%, #5c78b4 50%, #7c94c8)')};
`

const Toolbar = styled.nav`
    display: flex;
    flex: none;
    gap: 15px;
    height: 73px;
    margin: 0 1px 0 2px;
    padding-left: 3px;
    border-bottom: 1px solid #b4ccd8;
    border-radius: 4px 4px 0 0;
    background: linear-gradient(#b2cad8, #a2bac8 50%, #708894);
`

const Grip = styled.div`
    width: 2px;
    margin: 4px -12px 5px 0;
    background: repeating-linear-gradient(#2c4858 0 2px, transparent 2px 4px);
`

const Tools = styled.div`
    display: flex;
`

const Tool = styled.button`
    display: flex;
    flex-direction: column;
    align-items: center;
    width: 75px;
    padding-top: 4px;
    font-size: 12px;
    line-height: 18px;
    white-space: nowrap;
    &:disabled {
        color: #66747e;
        svg { filter: grayscale(1); opacity: 0.4; }
    }
`

const HelpBox = styled.div`
    display: flex;
    margin: 4px 4px 4px auto;
    border-left: 1px solid #607888;
    box-shadow: inset 1px 0 #b4ccd8;
    padding-left: 3px;
    ${Tool} { padding: 0; }
`

const Main = styled.main`
    display: grid;
    flex: 1;
    min-height: 0;
    grid-template-columns: minmax(0, 574fr) minmax(0, 900fr) 114px;
    padding: 2px 2px 0;
    column-gap: 4px;
`

const Panel = styled.section`
    display: flex;
    flex-direction: column;
    min-width: 0;
    min-height: 0;
`

const PanelTitle = styled.div`
    display: flex;
    flex: none;
    align-items: center;
    gap: 4px;
    height: 18px;
    padding: 0 4px 0 2px;
    margin-bottom: 3px;
    border: 1px solid #405460;
    background: #708896;
    ${(p) => p.$active && css`
        border-color: #102838;
        background: #102838;
        color: #fff;
    `}
`

const PanelName = styled.h2`
    flex: 1;
    margin: 0;
    font-size: 11px;
    font-weight: 400;
`

const TitleButton = styled.button`
    display: flex;
    align-items: center;
    justify-content: center;
    width: 10px;
    height: 12px;
`

const TreeArea = styled.div`
    display: flex;
    flex: 1;
    min-height: 0;
`

const TreeScroll = styled.div`
    flex: 1;
    min-width: 0;
    overflow: hidden;
    background: #fff;
`

const Grid = styled.table`
    width: 100%;
    table-layout: fixed;
    border-collapse: separate;
    border-spacing: 0;
`

const MovieGrid = styled(Grid)`
    width: 924px;
`

const Col = styled.col`
    width: ${(p) => p.$w}px;
`

const Th = styled.th`
    height: 18px;
    padding: 0;
    border-top: 1px solid #4c6472;
    border-bottom: 1px solid #607684;
    border-right: 1px solid #4c6472;
    box-shadow: inset 1px 0 #9cb2c0;
    background: linear-gradient(#7890a0 80%, #687e8c);
    font-weight: 400;
    white-space: nowrap;
`

const ThIcon = styled.div`
    display: flex;
    align-items: center;
    justify-content: center;
    height: 16px;
    color: ${(p) => (p.$dim ? '#c8d4dc' : 'inherit')};
`

const NameHead = styled.div`
    display: flex;
    align-items: center;
    padding-right: 6px;
    span { flex: 1; }
`

const TreeCell = styled.td`
    height: 19px;
    padding: 0;
`

const TreeLine = styled.div`
    display: flex;
    height: 19px;
`

const dots = 'repeating-linear-gradient(#909090 0 1px, transparent 1px 2px)'

const Guide = styled.span`
    display: flex;
    flex: none;
    align-items: center;
    justify-content: center;
    width: 19px;
    background:
        ${dots} 9px 0 / 1px ${(p) => (p.$last ? '50%' : '100%')} no-repeat
        ${(p) => p.$joint && css`, repeating-linear-gradient(90deg, #909090 0 1px, transparent 1px 2px) 10px 9px / 9px 1px no-repeat`};
`

const Expander = styled.button`
    flex: none;
    width: 11px;
    height: 11px;
    border: 1px solid #7888a8;
    border-right-color: #3c4c70;
    border-bottom-color: #3c4c70;
    border-radius: 1px;
    background:
        linear-gradient(#1c3060, #1c3060) center / 5px 1px no-repeat,
        ${(p) => !p.$open && css`linear-gradient(#1c3060, #1c3060) center / 1px 5px no-repeat,`}
        linear-gradient(135deg, #fff, #b4c4e4);
`

const RowIcon = styled.span`
    display: flex;
    flex: none;
    align-items: center;
    width: 19px;
    padding-left: 1px;
`

const RowText = styled.span`
    flex: 1;
    overflow: hidden;
    padding: 2px 1px;
    line-height: 15px;
    white-space: nowrap;
    ${(p) => p.$selected && css`
        background: #3399ff;
        color: #fff;
        outline: 1px dotted #a86820;
        outline-offset: -1px;
    `}
`

const StarLine = styled.div`
    display: flex;
    padding: 2px 0 0 6px;
    height: 19px;
`

const SortCell = styled.div`
    padding-left: 7px;
`

const ScrollBar = styled.div`
    display: flex;
    flex: ${(p) => (p.$wide ? '1' : '0 0 17px')};
    flex-direction: ${(p) => (p.$wide ? 'row' : 'column')};
    min-width: 0;
    background: #eee;
    border: solid #e2e2e2;
    border-width: ${(p) => (p.$wide ? '1px 0 0' : '0 0 0 1px')};
`

const ScrollArrow = styled.button`
    display: flex;
    flex: none;
    align-items: center;
    justify-content: center;
    width: ${(p) => (p.$wide ? '18px' : 'auto')};
    height: ${(p) => (p.$wide ? 'auto' : '18px')};
    color: #303030;
`

const Thumb = styled.div`
    flex: none;
    border: 1px solid #989898;
    border-radius: 2px;
    ${(p) => (p.$wide ? css`
        width: 156px;
        margin: 1px 0;
        background:
            repeating-linear-gradient(90deg, #707070 0 1px, transparent 1px 3px) center / 9px 7px no-repeat,
            linear-gradient(#f6f6f6, #e8e8ea 45%, #d2d2d6 50%, #c8c8cc);
    ` : css`
        height: 74px;
        margin: 54px 0 0 1px;
        background:
            repeating-linear-gradient(#606060 0 1px, transparent 1px 3px) center / 7px 9px no-repeat,
            linear-gradient(90deg, #f6f6f6, #e8e8ea 45%, #d2d2d6 50%, #c8c8cc);
    `)}
`

const Track = styled.div`
    flex: 1;
`

const SmallTools = styled.div`
    display: flex;
    flex: none;
    align-items: center;
    gap: 14px;
    height: ${(p) => (p.$tall ? 28 : 25)}px;
    padding: 0 0 ${(p) => (p.$tall ? 3 : 0)}px 5px;
    background: linear-gradient(#a8c0ce, #708894);
`

const ToolGroup = styled.div`
    display: flex;
    gap: 9px;
`

const SmallTool = styled.button`
    width: 16px;
    height: 16px;
`

const BottomTabs = styled.div`
    display: flex;
    flex: none;
    align-items: flex-start;
    height: 25px;
    margin-top: 2px;
    border-top: 1px solid #2c4656;
    background: linear-gradient(#9cb4c2, #708894);
`

const BottomTab = styled.button`
    height: 19px;
    padding: 0 3px;
    white-space: nowrap;
    &:first-child { padding: 0 0 0 8px; }
    ${(p) => p.$active && css`
        border: 1px solid #2c4656;
        border-top: 0;
        background: #94acbc;
    `}
`

const TabRule = styled.div`
    width: 1px;
    height: 16px;
    margin: 3px 0 0 3px;
    background: #c4d8e4;
`

const TopTabs = styled.div`
    display: flex;
    flex: none;
    align-items: flex-end;
    height: 22px;
    margin-bottom: 2px;
    padding-left: 5px;
    border-bottom: 1px solid #102838;
    background: linear-gradient(#98aebc, #5c7482);
`

const TopTab = styled.button`
    height: 17px;
    margin: 0 1px 1px 0;
    padding: 1px 5px 0 4px;
    background: #7890a0;
    ${(p) => p.$active && css`
        height: 20px;
        margin-bottom: -1px;
        border: 1px solid #102838;
        border-bottom: 0;
    `}
`

const ListScroll = styled.div`
    flex: 1;
    min-height: 0;
    overflow: hidden;
    background: #fff;
`

const MovieRow = styled.tr`
    background: #fff;
    &:nth-child(even) { background: #bed8e6; }
`

const MovieCell = styled.td`
    height: 20px;
    padding: ${(p) => (p.$center ? 0 : '0 1px')};
    border-right: 1px solid #4c6878;
    border-bottom: 1px solid #4c6878;
    text-align: ${(p) => (p.$center ? 'center' : 'left')};
    white-space: nowrap;
    overflow: hidden;
`

const MovieName = styled.div`
    display: flex;
    align-items: center;
    padding-left: 2px;
    svg { margin: 0 3px 0 6px; }
`

const Clip = styled.div`
    overflow: hidden;
    white-space: nowrap;
`

const NavBar = styled.div`
    display: flex;
    flex: none;
    height: 19px;
    background: #94acbc;
`

const NavButton = styled.button`
    display: flex;
    align-items: center;
    justify-content: center;
    width: 17px;
    border-left: 1px solid #c0d4e0;
    border-right: 1px solid #607884;
    background: linear-gradient(#a8c0ce, #7c94a2);
    &:disabled {
        border-color: transparent;
        background: none;
        color: #405460;
    }
`

const SideBar = styled.aside`
    display: flex;
    flex-direction: column;
    padding: 3px 4px;
    border-radius: 4px;
    background: linear-gradient(90deg, #b0c8d6, #a2bac8 50%, #708894);
`

const SideGrip = styled.div`
    height: 2px;
    background: repeating-linear-gradient(90deg, #2c4858 0 2px, transparent 2px 4px);
`

const SideTool = styled.button`
    display: flex;
    flex-direction: column;
    align-items: center;
    height: 75px;
    padding-top: 6px;
    border-bottom: 1px solid #607888;
    box-shadow: 0 1px #b4ccd8;
    font-size: 12px;
    line-height: 18px;
    white-space: nowrap;
    &:last-child { border-bottom: 0; box-shadow: none; }
`

const Status = styled.footer`
    display: flex;
    flex: none;
    gap: 2px;
    height: 18px;
    padding-left: 1px;
`

const StatusCell = styled.div`
    display: flex;
    flex: ${(p) => (p.$grow ? '1' : 'none')};
    align-items: center;
    justify-content: ${(p) => (p.$center ? 'center' : 'flex-start')};
    gap: 4px;
    width: ${(p) => (p.$w ? `${p.$w}px` : 'auto')};
    padding-left: ${(p) => (p.$grow ? 2 : 0)}px;
    border: 1px solid #587080;
    border-bottom-color: #8098a6;
    background: linear-gradient(#a8c0ce, #94acba 60%, #7c949f);
`

const Swatches = styled.div`
    display: flex;
    background: #90a8b6;
    border: 1px solid #587080;
`

const SwatchPair = styled.div`
    display: flex;
    align-items: center;
    gap: 3px;
    padding: 0 4px 0 3px;
    & + & { border-left: 1px solid #587080; }
`

const Swatch = styled.button`
    width: 14px;
    height: 12px;
    border: 1px solid #6c8494;
    background: ${(p) => p.$color};
`

const StatusCheck = styled.input`
    appearance: none;
    width: 13px;
    height: 13px;
    margin: 0;
    border: 1px solid #506878;
    background: #fff;
`

const Taskbar = styled.div`
    flex: none;
    height: 1px;
    background: #28406c;
`

export default App
